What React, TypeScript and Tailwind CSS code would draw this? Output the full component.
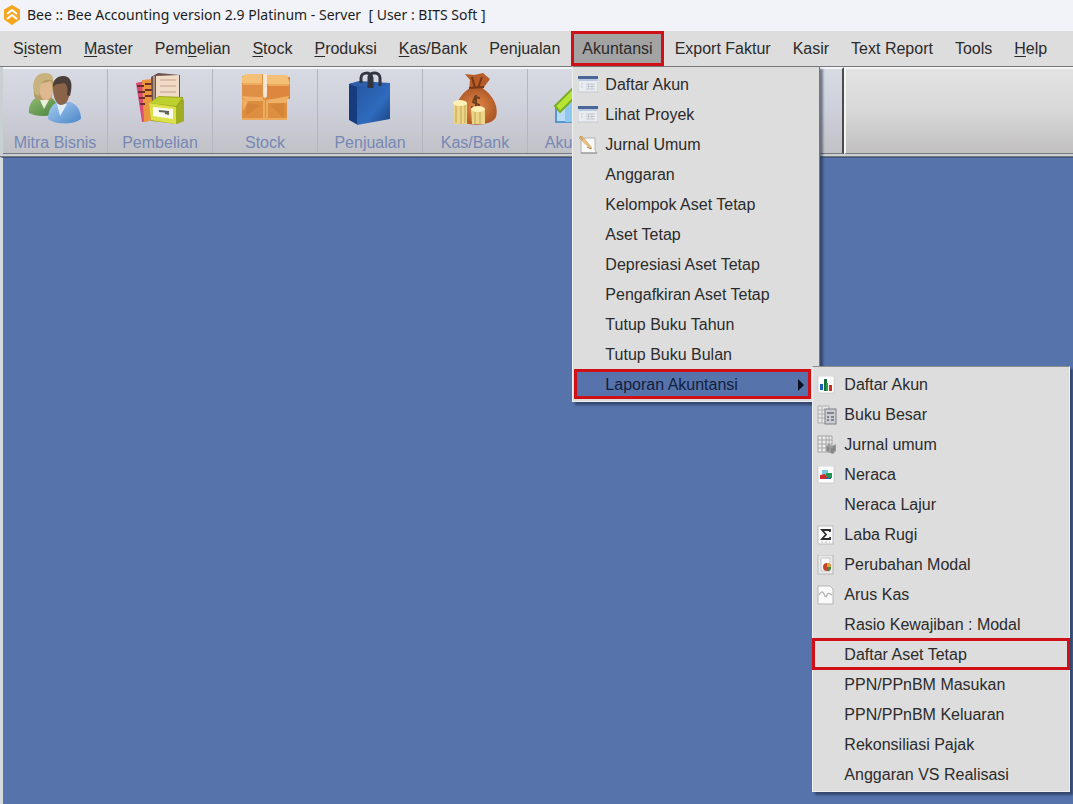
import { useState } from 'react';
import type { ReactNode } from 'react';

interface MenuEntry {
  label: string;
  icon?: ReactNode;
}

/* ---------- small menu icons ---------- */

const WindowIcon = () => (
  <svg width="20" height="18" viewBox="0 0 20 18" aria-hidden="true">
    <rect x="0" y="1" width="20" height="15" fill="#e9edf2" stroke="#c3c8d0" />
    <rect x="0" y="0" width="20" height="3" fill="#4a6798" />
    <rect x="1" y="3" width="18" height="2" fill="#b9c8dd" />
    <path d="M3 8h2M3 11h2M8 8h9M8 10.500h9M8 13h9M10.500 8v5M14 8v5" stroke="#c3c9d2" />
  </svg>
);

const JournalIcon = () => (
  <svg width="20" height="20" viewBox="0 0 20 20" aria-hidden="true">
    <path d="M3 3h14v12l2 3H3z" fill="#f8f8f8" stroke="#b2b2b2" />
    <path d="M3 18h16" stroke="#8e8e8e" />
    <path d="M1 3l3-2 10 12-1 1z" fill="#edc27f" stroke="#c9a05e" strokeWidth=".7" />
    <path d="M2 1l3 4M9 12l4 2" stroke="#a58a5c" />
  </svg>
);

const BarsIcon = () => (
  <svg width="18" height="18" viewBox="0 0 18 18" aria-hidden="true">
    <rect x="1" y="0" width="16" height="17" fill="#fdfdfd" stroke="#c4c4c4" strokeWidth=".7" />
    <rect x="3" y="8" width="3" height="6" fill="#1d5fb4" />
    <rect x="7" y="3" width="3" height="12" fill="#176e3a" />
    <rect x="9" y="7" width="2" height="8" fill="#2e9d4f" />
    <rect x="12" y="9" width="3" height="6" fill="#c93022" />
  </svg>
);

const LedgerIcon = () => (
  <svg width="20" height="20" viewBox="0 0 20 20" aria-hidden="true">
    <path d="M1 1h11v17H1zM1 5h11M1 9h8M1 13h8M5 1v17" fill="#e8e8e8" stroke="#b0b0b0" />
    <rect x="8" y="4" width="11" height="15" fill="#c9cdd1" stroke="#7d8084" />
    <path d="M10 8h7M10 12h2M14 12h3M10 15h2M14 15h3" stroke="#6b6f74" strokeWidth="1.500" />
  </svg>
);

const TableIcon = () => (
  <svg width="20" height="20" viewBox="0 0 20 20" aria-hidden="true">
    <path d="M1 1h14v16H1zM1 5h14M1 9h14M1 13h14M5 1v16M9 1v16M12 1v16" fill="#ececec" stroke="#a5a5a5" />
    <path d="M9 11l3-2 3 2 4-2v7l-3 3-3-1-4-2z" fill="#9b9b9b" />
    <path d="M11 12v4M15 13v5M17 11v5" stroke="#717171" />
  </svg>
);

const BalanceIcon = () => (
  <svg width="18" height="18" viewBox="0 0 18 18" aria-hidden="true">
    <rect x="1" y="0" width="16" height="17" fill="#fdfdfd" stroke="#c4c4c4" strokeWidth=".7" />
    <rect x="5" y="4" width="6" height="5" fill="#7cc7e0" />
    <rect x="9" y="7" width="6" height="5" fill="#229456" />
    <path d="M3 9l5-1 3 5H3z" fill="#cf2b2b" />
    <path d="M9 12h5v1H9z" fill="#255da8" />
  </svg>
);

const SigmaIcon = () => (
  <svg width="18" height="20" viewBox="0 0 18 20" aria-hidden="true">
    <rect x="1" y="1" width="15" height="18" fill="#fbfbfb" stroke="#bbbbbb" />
    <path d="M13 7V5H5l4 4.500L5 14h8v-2" fill="none" stroke="#2c2c2c" strokeWidth="1.800" />
    <path d="M4 17h2M8 17h2M12 17h1" stroke="#b9b9b9" />
  </svg>
);

const EquityIcon = () => (
  <svg width="18" height="20" viewBox="0 0 18 20" aria-hidden="true">
    <rect x="1" y="0" width="15" height="19" fill="#eaeaea" stroke="#b8b8b8" />
    <path d="M4 3h9v13H4z" fill="#fafafa" stroke="#c4c4c4" />
    <circle cx="10" cy="12" r="4" fill="#c9402d" />
    <path d="M10 12V8a4 4 0 0 1 4 4z" fill="#e3a62f" />
    <path d="M10 12h4a4 4 0 0 1-4 4z" fill="#438344" />
  </svg>
);

const CashflowIcon = () => (
  <svg width="18" height="20" viewBox="0 0 18 20" aria-hidden="true">
    <path d="M1 1h12l3 3v15H1z" fill="#fafafa" stroke="#b5b5b5" />
    <path d="M2 10c2-4 4-4 5-1s2 4 3 1 3-1 5 0" fill="none" stroke="#b3b3b3" strokeWidth="1.300" />
  </svg>
);

/* ---------- toolbar icons ---------- */

const PartnersIcon = () => (
  <svg width="54" height="54" viewBox="0 0 54 54" aria-hidden="true">
    <defs>
      <linearGradient id="green" x1="0" y1="0" x2="1" y2="1">
        <stop offset="0" stopColor="#91bc76" />
        <stop offset="1" stopColor="#48823a" />
      </linearGradient>
      <linearGradient id="blue" x1="0" y1="0" x2="1" y2="1">
        <stop offset="0" stopColor="#a8cdf0" />
        <stop offset="1" stopColor="#4a86c8" />
      </linearGradient>
    </defs>
    <path d="M1 41c-1-7 3-14 9-16h12c6 3 8 9 7 16-7 4-21 4-28 0z" fill="url(#green)" />
    <path d="M12 28l4 9 5-9z" fill="#e9efda" />
    <path d="M6 21C4 8 8 2 16 2c8 0 11 5 9 15l-2 11H10c-3-1-4-3-4-7z" fill="#b39b65" />
    <path d="M11 12l12-3c3 8 1 19-5 19-5 0-8-8-7-16z" fill="#e0b890" />
    <path d="M6 18C5 7 9 1 17 1c6 0 9 3 8 8-7-3-12 0-13 8l-1 7c-3-1-5-3-5-6z" fill="#c8b37e" />
    <path d="M20 47c0-9 4-15 10-17h12c7 2 11 9 11 17-8 6-25 6-33 0z" fill="url(#blue)" />
    <path d="M29 32l3 12 7-12z" fill="#dfecf8" />
    <path d="M25 17c-1-8 3-12 9-12s9 5 8 14c-1 9-4 14-9 14-4 0-8-7-8-16z" fill="#8a6348" />
    <path d="M25 15c0-7 4-11 10-11 9 0 10 9 7 20l-3-1c1-7 0-11-3-12-4 1-8 0-11 4z" fill="#4b3d38" />
  </svg>
);

const PurchaseIcon = () => (
  <svg width="52" height="54" viewBox="0 0 52 54" aria-hidden="true">
    <path d="M2 11l9-2 4 40-7 1z" fill="#d84c76" />
    <path d="M8 8l10-1 1 41-9 2z" fill="#eb963c" />
    <path d="M3 14h7M4 20h7M5 26h6M6 32h5M11 12h7M11 18h7M11 24h7" stroke="#6c332e" strokeWidth="2" />
    <path d="M17 5l7-4 22 2v26l-28 3z" fill="#6b514c" />
    <path d="M22 4l23-1v26l-23 3z" fill="#f0dbc7" />
    <path d="M20 4v27M26 8h16M26 14h16M26 20h16" stroke="#cdb5a2" strokeWidth="1.300" />
    <path d="M15 31l10-7 24 1 1 8v16l-7 3-26-3z" fill="#9ba81f" />
    <path d="M15 31l27 4v17l-25-4z" fill="#dce04b" />
    <path d="M15 31l10-6 23 1-6 8z" fill="#bed02d" />
    <path d="M42 35l8-7v21l-8 3z" fill="#a0ad22" />
    <path d="M19 35l20 2v10l-20-3z" fill="#fafaf0" />
    <path d="M25 39l10 1M31 41l4 1" stroke="#61645a" strokeWidth="2" />
  </svg>
);

const StockIcon = () => (
  <svg width="54" height="54" viewBox="0 0 54 54" aria-hidden="true">
    <path d="M4 25h45v23H4z" fill="#dd8e41" />
    <path d="M4 4l21-2v25H4z" fill="#df9046" />
    <path d="M29 4l23 1v22H29z" fill="#dc873d" />
    <path d="M4 5l4-3h16v9H4zM29 3h20l3 9H29z" fill="#f4bf76" />
    <path d="M3 24l5 5h17v-4h-9zM29 28l22-4-3 7H29zM4 27l6 3-5 9z" fill="#efb066" />
    <path d="M25 2h4v20l-2 5-2-5z" fill="#f5e7d3" />
    <path d="M26 28v20M29 28v20M4 47h45M5 12h19M30 13h21" stroke="#edab5e" strokeWidth="2" />
    <path d="M9 31l14 2-16 11zM32 33l14-2v15z" fill="#c87730" opacity=".4" />
  </svg>
);

const SalesIcon = () => (
  <svg width="46" height="56" viewBox="0 0 46 56" aria-hidden="true">
    <defs>
      <linearGradient id="bag" x1="0" y1="0" x2="1" y2="1">
        <stop offset="0" stopColor="#2556a4" />
        <stop offset=".6" stopColor="#2f6bbd" />
        <stop offset="1" stopColor="#194381" />
      </linearGradient>
    </defs>
    <path d="M2 13l9-2v43l-9-5z" fill="#163c7d" />
    <path d="M10 13l33-1v36l-33 6z" fill="url(#bag)" />
    <path d="M2 13l10-3 31 2-33 4z" fill="#2c5fa8" />
    <path d="M14 12V7c0-6 10-7 11 0v10M22 17V6c1-6 11-5 11 1v8" fill="none" stroke="#303641" strokeWidth="3" />
  </svg>
);

const CashIcon = () => (
  <svg width="48" height="56" viewBox="0 0 48 56" aria-hidden="true">
    <defs>
      <radialGradient id="sack">
        <stop offset="0" stopColor="#e28948" />
        <stop offset="1" stopColor="#b05a28" />
      </radialGradient>
    </defs>
    <path d="M14 3l9 1 9-2 7 6-8 11H18l1-10z" fill="#b65d2b" />
    <path d="M19 17h12c10 6 17 18 14 29-4 10-33 10-39 1-4-11 2-23 13-30z" fill="url(#sack)" />
    <path d="M18 17l15-1M21 6l3 11M31 6l-4 11" stroke="#793716" strokeWidth="2" />
    <path d="M29 27l-5-1-2 5 6 3-2 4-6-2M25 24v17" fill="none" stroke="#71401e" strokeWidth="2" />
    <path d="M2 32h14v21H3zM20 38h14v15H21z" fill="#ead589" />
    <ellipse cx="9" cy="32" rx="7" ry="3" fill="#fff0b5" />
    <ellipse cx="27" cy="38" rx="7" ry="3" fill="#fff0b5" />
    <path d="M5 35v17M10 35v18M14 34v18M24 41v12M29 41v12" stroke="#c6a454" />
  </svg>
);

const AccountingIcon = () => (
  <svg width="54" height="54" viewBox="0 0 54 54" aria-hidden="true">
    <path d="M3 33h47v17H3z" fill="#b7dcf7" stroke="#5697d0" strokeWidth="2" />
    <path d="M12 28h10v22H12z" fill="#8ec7ef" />
    <path d="M2 34L23 13l6 5L7 40z" fill="#b7e536" stroke="#7bac26" strokeWidth="2" />
  </svg>
);

const BeeLogo = () => (
  <svg width="18" height="20" viewBox="0 0 18 20" aria-hidden="true">
    <path d="M9 1l7 4v9l-7 5-7-5V5z" fill="#f4a623" stroke="#f4a623" strokeWidth="2" strokeLinejoin="round" />
    <path d="M4 9l5-4 5 4M4 14l5-4 5 4" fill="none" stroke="#fff" strokeWidth="2" strokeLinejoin="round" />
  </svg>
);

/* ---------- data ---------- */

// second value is the index of the underlined shortcut letter
const menuBar: [string, number][] = [
  ['Sistem', 1],
  ['Master', 0],
  ['Pembelian', 3],
  ['Stock', 0],
  ['Produksi', 0],
  ['Kas/Bank', 0],
  ['Penjualan', -1],
  ['Akuntansi', -1],
  ['Export Faktur', -1],
  ['Kasir', -1],
  ['Text Report', -1],
  ['Tools', -1],
  ['Help', 0],
];

const toolbar: MenuEntry[] = [
  { label: 'Mitra Bisnis', icon: <PartnersIcon /> },
  { label: 'Pembelian', icon: <PurchaseIcon /> },
  { label: 'Stock', icon: <StockIcon /> },
  { label: 'Penjualan', icon: <SalesIcon /> },
  { label: 'Kas/Bank', icon: <CashIcon /> },
  { label: 'Akuntansi', icon: <AccountingIcon /> },
];

const accountingMenu: MenuEntry[] = [
  { label: 'Daftar Akun', icon: <WindowIcon /> },
  { label: 'Lihat Proyek', icon: <WindowIcon /> },
  { label: 'Jurnal Umum', icon: <JournalIcon /> },
  { label: 'Anggaran' },
  { label: 'Kelompok Aset Tetap' },
  { label: 'Aset Tetap' },
  { label: 'Depresiasi Aset Tetap' },
  { label: 'Pengafkiran Aset Tetap' },
  { label: 'Tutup Buku Tahun' },
  { label: 'Tutup Buku Bulan' },
];

const reportMenu: MenuEntry[] = [
  { label: 'Daftar Akun', icon: <BarsIcon /> },
  { label: 'Buku Besar', icon: <LedgerIcon /> },
  { label: 'Jurnal umum', icon: <TableIcon /> },
  { label: 'Neraca', icon: <BalanceIcon /> },
  { label: 'Neraca Lajur' },
  { label: 'Laba Rugi', icon: <SigmaIcon /> },
  { label: 'Perubahan Modal', icon: <EquityIcon /> },
  { label: 'Arus Kas', icon: <CashflowIcon /> },
  { label: 'Rasio Kewajiban : Modal' },
  { label: 'Daftar Aset Tetap' },
  { label: 'PPN/PPnBM Masukan' },
  { label: 'PPN/PPnBM Keluaran' },
  { label: 'Rekonsiliasi Pajak' },
  { label: 'Anggaran VS Realisasi' },
];

/* ---------- components ---------- */

function MenuRow({ label, icon, marked = false }: MenuEntry & { marked?: boolean }) {
  return (
    <li role="none">
      <button
        role="menuitem"
        className={`flex h-[30px] w-full items-center whitespace-nowrap pt-[2px] text-left ${
          marked ? 'outline-3 -outline-offset-2 outline-[#cf1017]' : ''
        }`}
      >
        <span className="flex w-[31px] shrink-0 items-center pl-1">{icon}</span>
        {label}
      </button>
    </li>
  );
}

function ReportMenu() {
  return (
    <ul
      role="menu"
      aria-label="Laporan Akuntansi"
      className="absolute -top-[3px] left-full z-20 ml-px w-[258px] border border-[#efefef] border-t-[#8d8d8d] bg-[#dddddd] py-[2px] shadow-[3px_3px_2px_rgba(20,30,50,0.5)]"
    >
      {reportMenu.map((entry) => (
        <MenuRow key={entry.label} {...entry} marked={entry.label === 'Daftar Aset Tetap'} />
      ))}
    </ul>
  );
}

function AccountingMenu() {
  const [reportsOpen, setReportsOpen] = useState(true);

  return (
    <ul
      role="menu"
      aria-label="Akuntansi"
      className="absolute left-px top-full z-10 w-[248px] border border-[#eeeeee] border-r-[#777777] border-t-[#777777] bg-[#dddddd] pb-[2px] pl-px pr-2 pt-[2px] shadow-[3px_3px_2px_rgba(20,30,50,0.5)]"
    >
      {accountingMenu.map((entry) => (
        <MenuRow key={entry.label} {...entry} />
      ))}
      <li role="none" className="relative">
        <button
          role="menuitem"
          aria-haspopup="menu"
          aria-expanded={reportsOpen}
          onClick={() => setReportsOpen(!reportsOpen)}
          className="flex h-[30px] w-full items-center justify-between border-3 border-[#cf1017] bg-[#5673ab] pl-7 pr-1 pt-[2px] text-[#14203c]"
        >
          Laporan Akuntansi
          <svg width="6" height="12" viewBox="0 0 6 12" aria-hidden="true">
            <path d="M0 0l6 6-6 6z" fill="#0a1020" />
          </svg>
        </button>
        {reportsOpen && <ReportMenu />}
      </li>
    </ul>
  );
}

function MenuLabel({ text, hotkey }: { text: string; hotkey: number }) {
  if (hotkey < 0) return <>{text}</>;
  return (
    <>
      {text.slice(0, hotkey)}
      <span className="underline underline-offset-2">{text[hotkey]}</span>
      {text.slice(hotkey + 1)}
    </>
  );
}

export default function App() {
  const [openMenu, setOpenMenu] = useState('Akuntansi');

  return (
    <div className="flex min-h-screen flex-col bg-[#5673ab] font-['Liberation_Sans',Arial,sans-serif] text-base text-[#2b2b2b]">
      {/* Title bar */}
      <header className="flex h-[31px] items-center gap-[6px] bg-[#f1f3f9] px-[3px] pb-[2px]">
        <BeeLogo />
        <h1 className="whitespace-pre font-['Noto_Sans','Open_Sans',sans-serif] text-sm text-[#1c1c1c]">
          Bee :: Bee Accounting version 2.9 Platinum - Server  [ User : BITS Soft ]
        </h1>
      </header>

      {/* Menu bar */}
      <nav className="bg-[#dddddd] pl-[2px]" aria-label="Menu utama">
        <ul role="menubar" className="flex h-[35px]">
          {menuBar.map(([text, hotkey]) => {
            const open = openMenu === text;
            return (
              <li key={text} role="none" className="relative flex">
                <button
                  role="menuitem"
                  aria-expanded={open}
                  onClick={() => setOpenMenu(open ? '' : text)}
                  className={`whitespace-nowrap px-[11px] ${
                    open ? 'bg-[#a3a3a3] outline-3 -outline-offset-3 outline-[#cf1017]' : ''
                  }`}
                >
                  <MenuLabel text={text} hotkey={hotkey} />
                </button>
                {open && text === 'Akuntansi' && <AccountingMenu />}
              </li>
            );
          })}
        </ul>
      </nav>

      {/* Toolbar */}
      <div className="flex h-[91px] border-b border-t border-[#77797c] bg-[#c9d0d4] pb-[2px] pl-[3px]">
        <div
          role="toolbar"
          aria-label="Modul"
          className="flex w-[841px] shrink-0 border-b border-r-2 border-t-2 border-b-[#77797c] border-r-[#4b4b4b] border-t-[#f5f5f8] bg-linear-to-b from-[#d8dae3] via-[#cdcfda] to-[#c1c1c7]"
        >
          {toolbar.map(({ label, icon }) => (
            <button
              key={label}
              className="flex w-[105px] flex-col items-center justify-between border-r border-[#b3b5c0] pt-[2px] leading-5 text-[#7788b4]"
            >
              <span className="flex h-14 items-center">{icon}</span>
              {label}
            </button>
          ))}
        </div>
        <div className="flex-1 border-b border-l-2 border-t-2 border-b-[#77797c] border-l-[#f5f5f5] border-t-[#f5f5f5] bg-linear-to-b from-[#e3e3e3] via-[#d8d8d8] to-[#c1bfc0]" />
      </div>

      {/* Work area */}
      <main className="flex-1 border-l-3 border-t border-l-[#d5dadd] border-t-[#3f5684] bg-[#5673ab]" />
    </div>
  );
}
